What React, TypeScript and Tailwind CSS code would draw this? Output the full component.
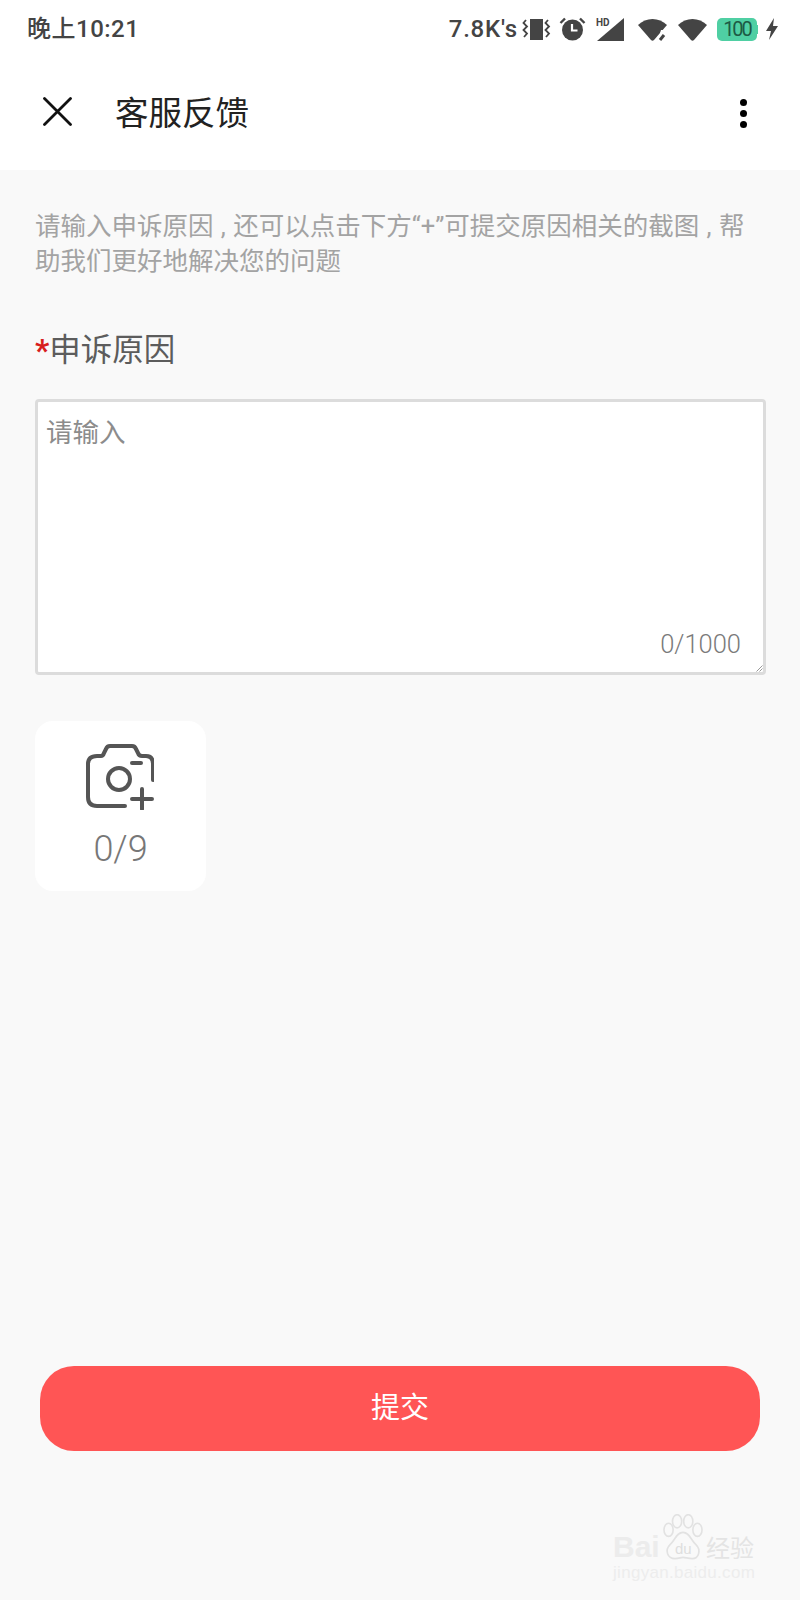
const cjk = "font-['Roboto','Noto_Sans_CJK_SC',sans-serif]";

function VibrateIcon() {
  return (
    <svg width="30" height="26" viewBox="0 0 30 26" fill="none">
      <rect x="8" y="3" width="13" height="21" fill="#444" />
      <path d="M4 4 L1.500 7 L5 10.500 L1.500 14 L5 17.500 L2 21" stroke="#444" strokeWidth="1.800" />
      <path d="M26 4 L23.500 7 L27 10.500 L23.500 14 L27 17.500 L24 21" stroke="#444" strokeWidth="1.800" />
    </svg>
  );
}

function AlarmIcon() {
  return (
    <svg width="27" height="26" viewBox="0 0 27 26" fill="none">
      <circle cx="13.500" cy="14" r="10.500" fill="#444" />
      <path d="M13 8 V14.500 H18.500" stroke="#fff" strokeWidth="2.200" />
      <path d="M1.500 7 L6 2.500 M25.500 7 L21 2.500" stroke="#444" strokeWidth="2.400" />
    </svg>
  );
}

function SignalIcon() {
  return (
    <div className="relative w-[29px] h-[26px]">
      <svg width="29" height="26" viewBox="0 0 29 26">
        <path d="M1 25 L28 2 V25 Z" fill="#444" />
      </svg>
      <span className="absolute left-0 top-[1px] text-[10px] leading-[11px] font-bold text-[#444] font-['Roboto',sans-serif]">
        HD
      </span>
    </div>
  );
}

function WifiIcon({ slash }: { slash?: boolean }) {
  return (
    <svg width="31" height="26" viewBox="0 0 31 26">
      <path d="M1 9 C9 1 22 1 30 9 L17 24 Q15.500 25.500 14 24 Z" fill="#444" />
      {slash && (
        <>
          <path d="M24 14 L32 14 L32 27 L20 27 Z" fill="#fff" />
          <path d="M23 24 L27 19" stroke="#444" strokeWidth="3" />
        </>
      )}
    </svg>
  );
}

function BoltIcon() {
  return (
    <svg width="14" height="24" viewBox="0 0 14 24">
      <path d="M9 1 L1 14 H6 L4 23 L13 9 H8 Z" fill="#444" />
    </svg>
  );
}

function CameraPlusIcon() {
  return (
    <svg className="mr-[2px]" width="68" height="66" viewBox="0 0 68 66" fill="none" stroke="#555" strokeWidth="4" strokeLinecap="round" strokeLinejoin="round">
      <path d="M39 62 H11 Q2 62 2 53 V20 Q2 12 11 12 H15 Q17 12 18 9 L20 5 Q21 2 24 2 H46 Q49 2 50 5 L52 9 Q53 12 56 12 H60 Q67 12 67 20 V36" />
      <circle cx="33" cy="35" r="11" />
      <path d="M46 19 H55" />
      <path d="M46 55 H66 M56 45 V65" />
    </svg>
  );
}

function Watermark() {
  return (
    <div className="absolute left-[613px] top-[1514px] w-[186px] h-[76px] pointer-events-none">
      <svg className="absolute left-[49px] top-0" width="42" height="46" viewBox="0 0 64 70" fill="none" stroke="#e2e2e2" strokeWidth="2.500">
        <ellipse cx="10" cy="24" rx="7" ry="10" />
        <ellipse cx="23" cy="11" rx="7" ry="10" />
        <ellipse cx="40" cy="11" rx="7" ry="10" />
        <ellipse cx="54" cy="24" rx="7" ry="10" />
        <path d="M32 28 C22 28 20 40 12 47 C4 55 8 68 20 68 C26 68 28 66 32 66 C36 66 40 68 46 68 C56 68 60 55 52 47 C44 40 42 28 32 28 Z" />
      </svg>
      <span className="absolute left-0 top-[19px] text-[30px] leading-[27px] font-bold font-['Liberation_Sans',sans-serif] text-[#ececec]">
        Bai
      </span>
      <span className="absolute left-[62px] top-[27px] text-[15px] leading-[16px] font-['Liberation_Sans',sans-serif] text-[#dedede]">
        du
      </span>
      <span className="absolute left-[93px] top-[19px] text-[24px] leading-[27px] text-[#e4e4e4] font-['Noto_Sans_CJK_SC',sans-serif]">
        经验
      </span>
      <span className="absolute left-0 top-[49px] text-[17px] leading-[20px] tracking-[0.3px] text-[#ededed] font-['Liberation_Sans',sans-serif]">
        jingyan.baidu.com
      </span>
    </div>
  );
}

export default function App() {
  return (
    <div className={`relative w-[800px] h-[1600px] bg-[#f9f9f9] overflow-hidden ${cjk}`}>
      {/* status bar + title */}
      <div className="bg-white h-[170px]">
        <div className="flex items-center justify-between h-[58px] pl-[27px] pr-[21px]">
          <span className="text-[24px] font-medium text-[#444] leading-none tracking-[0.5px]">晚上10:21</span>
          <div className="flex items-center">
            <span className="text-[24px] font-medium text-[#444] leading-none mr-[4px] tracking-[0.8px]">7.8K's</span>
            <VibrateIcon />
            <div className="w-[7px]" />
            <AlarmIcon />
            <div className="w-[10px]" />
            <SignalIcon />
            <div className="w-[12px]" />
            <WifiIcon slash />
            <div className="w-[9px]" />
            <WifiIcon />
            <div className="w-[9px]" />
            <div className="flex items-center justify-center w-[40px] h-[23px] rounded-[5px] bg-[#4fcfa3] text-[20px] leading-none tracking-[-2px] text-[#1d5a45]">
              100
            </div>
            <div className="w-[1px] h-[9px] bg-[#4fcfa3]" />
            <div className="w-[7px]" />
            <BoltIcon />
          </div>
        </div>
        <div className="flex items-center h-[112px] pl-[43px] pr-[53px]">
          <svg className="mb-[6px]" width="29" height="29" viewBox="0 0 29 29" fill="none" stroke="#111" strokeWidth="2.800" strokeLinecap="round">
            <path d="M1.500 1.500 L27.500 27.500 M27.500 1.500 L1.500 27.500" />
          </svg>
          <h1 className="ml-[43px] text-[33.500px] leading-none font-normal text-[#222]">客服反馈</h1>
          <div className="ml-auto mb-[2px] flex flex-col gap-[4px]">
            <div className="w-[7px] h-[7px] rounded-full bg-black" />
            <div className="w-[7px] h-[7px] rounded-full bg-black" />
            <div className="w-[7px] h-[7px] rounded-full bg-black" />
          </div>
        </div>
      </div>

      <div className="px-[35px] pt-[39px]">
        <p className="text-[25.500px] leading-[35px] text-[#a3a3a3] [word-spacing:1px]">
          请输入申诉原因 , 还可以点击下方“+”可提交原因相关的截图 , 帮助我们更好地解决您的问题
        </p>
        <div className="mt-[50px] flex items-center h-[44px] text-[31.500px] leading-none text-[#5c5c5c]">
          <span className="text-[#d81e1e] font-bold">*</span>
          <span>申诉原因</span>
        </div>
        <div className="mt-[26px] relative w-[731px] h-[276px] bg-white border-[3px] border-[#dcdcdc] rounded-[4px] pl-[8px] pt-[13px]">
          <p className="text-[26.500px] leading-[36px] text-[#8c8c8c]">请输入</p>
          <span className="absolute right-[22px] bottom-[13px] text-[25.500px] leading-[30px] font-light text-[#7a7a7a]">0/1000</span>
          <svg className="absolute right-0 bottom-0" width="7" height="7" viewBox="0 0 7 7" fill="none" stroke="#999" strokeWidth="1">
            <path d="M6.500 0.500 L0.500 6.500 M6.500 3.500 L3.500 6.500" />
          </svg>
        </div>
        <div className="mt-[46px] flex flex-col items-center w-[171px] h-[170px] bg-white rounded-[18px] pt-[23px]">
          <CameraPlusIcon />
          <span className="mt-[21px] text-[36px] leading-[36px] font-light text-[#777]">0/9</span>
        </div>
        <button className="mt-[475px] ml-[5px] flex items-center justify-center w-[720px] h-[85px] rounded-[34px] bg-[#ff5555] text-white text-[29px]">
          提交
        </button>
      </div>
      <Watermark />
    </div>
  );
}
